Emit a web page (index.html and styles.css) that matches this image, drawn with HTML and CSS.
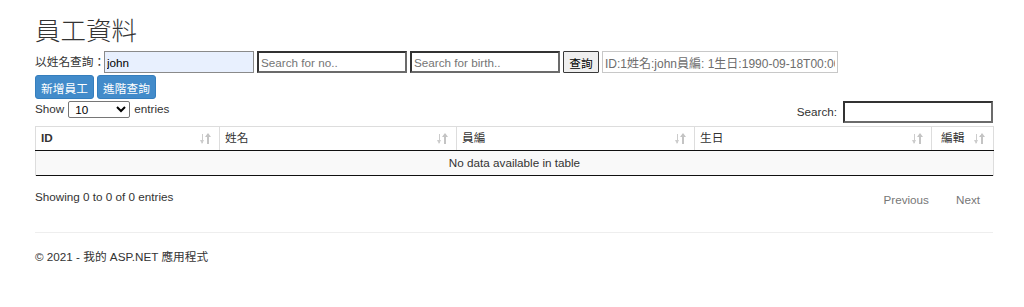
FILE: index.html
```html
<!DOCTYPE html>
<html lang="zh-Hant">
<head>
<meta charset="utf-8">
<title>員工資料</title>
<link rel="stylesheet" href="styles.css">
</head>
<body>
<div class="container">
  <h2 class="title">員工資料</h2>
  <div class="query-row">
    <label class="qlabel">以姓名查詢：</label>
    <input class="inp inp-auto" type="text" value="john">
    <input class="inp inp-dark" type="text" placeholder="Search for no..">
    <input class="inp inp-dark" type="text" placeholder="Search for birth..">
    <button class="btn-plain">查詢</button>
    <input class="inp inp-ro" type="text" readonly value="ID:1姓名:john員編: 1生日:1990-09-18T00:00:00">
  </div>
  <div class="btn-row">
    <button class="btn-blue">新增員工</button>
    <button class="btn-blue">進階查詢</button>
  </div>
  <div class="dt-top">
    <div class="dt-length">Show <select class="sel"><option>10</option></select> entries</div>
    <div class="dt-filter">Search: <input class="inp inp-dark inp-search" type="search"></div>
  </div>
  <table class="dt">
    <thead>
      <tr>
        <th class="c-id"><b>ID</b><span class="sort"></span></th>
        <th class="c-name">姓名<span class="sort"></span></th>
        <th class="c-no">員編<span class="sort"></span></th>
        <th class="c-birth">生日<span class="sort"></span></th>
        <th class="c-edit">編輯<span class="sort"></span></th>
      </tr>
    </thead>
    <tbody>
      <tr><td colspan="5" class="empty">No data available in table</td></tr>
    </tbody>
  </table>
  <div class="dt-bottom">
    <div class="dt-info">Showing 0 to 0 of 0 entries</div>
    <div class="dt-paginate"><span class="pg">Previous</span><span class="pg">Next</span></div>
  </div>
  <hr class="rule">
  <footer class="foot">© 2021 - 我的 ASP.NET 應用程式</footer>
</div>
</body>
</html>
```
FILE: styles.css
```css
html, body { margin: 0; padding: 0; background: #fff; }
body {
  font-family: "Liberation Sans", "Noto Sans CJK TC", sans-serif;
  font-size: 11.7px;
  line-height: 1.42857;
  color: #333;
}
.container { width: 958px; margin-left: 35px; }
.title {
  font-family: "Noto Sans CJK TC", sans-serif;
  font-size: 25.5px;
  font-weight: 300;
  line-height: 1.1;
  margin: 15px 0 8px;
  color: #333;
}
.query-row { display: flex; align-items: center; gap: 3px; height: 22px; }
.qlabel { width: 66px; white-space: nowrap; }
.inp {
  box-sizing: border-box;
  font-family: "Liberation Sans", "Noto Sans CJK TC", sans-serif;
  font-size: 11.7px;
  width: 150px;
  height: 22px;
  padding: 1px 2px;
  margin: 0;
  color: #000;
  background: #fff;
}
.inp::placeholder { color: #757575; }
.inp-auto { border: 1px solid #8a8a8a; background: #e8f0fe; }
.inp-dark { border: 2px solid #333; border-right-color: #6b6b6b; border-bottom-color: #6b6b6b; }
.inp-ro { width: 236px; border: 1px solid #c8c8c8; color: #6d6d6d; font-size: 12px; }
.btn-plain {
  box-sizing: border-box;
  height: 22px; width: 36px;
  padding: 0;
  font-family: "Noto Sans CJK TC", sans-serif;
  font-size: 11.7px;
  color: #000;
  background: #efefef;
  border: 1px solid #3a3a3a;
  border-radius: 1px;
}
.btn-row { display: flex; gap: 3px; margin-top: 2px; }
.btn-blue {
  box-sizing: border-box;
  width: 59px; height: 24px;
  padding: 0;
  font-family: "Liberation Sans", "Noto Sans CJK TC", sans-serif;
  font-size: 11.7px;
  color: #fff;
  background: #428bca;
  border: 1px solid #357ebd;
  border-radius: 3px;
}
.dt-top { display: flex; justify-content: space-between; align-items: flex-start; margin-top: 2px; height: 25px; }
.dt-length { display: flex; align-items: center; gap: 4px; height: 17px; }
.sel {
  box-sizing: border-box;
  width: 62px; height: 17px;
  font-family: "Liberation Sans", sans-serif;
  font-size: 11.7px;
  padding: 0 2px;
  border: 1px solid #767676;
  border-radius: 2px;
  background: #fff;
  color: #000;
}
.dt-filter { display: flex; align-items: center; gap: 6px; color: #333; }
.inp-search { width: 150px; height: 22px; }
.dt {
  width: 958px;
  table-layout: fixed;
  border-collapse: collapse;
  margin-top: 0;
  border-bottom: 1px solid #111;
}
.dt th {
  box-sizing: border-box;
  position: relative;
  text-align: left;
  font-weight: 400;
  padding: 0 18px 0 5px;
  height: 24px;
  border: 1px solid #ddd;
  border-bottom: 1px solid #111;
  vertical-align: middle;
}
.dt th b { font-weight: 700; }
.c-id { width: 184px; }
.c-name { width: 237px; }
.c-no { width: 238px; }
.c-birth { width: 237px; }
.c-edit { width: 62px; padding-left: 9px !important; }
.sort {
  position: absolute;
  right: 7px; top: 6px;
  width: 12px; height: 12px;
  background:
    linear-gradient(#ccc, #ccc) 2px 1px / 1px 9px no-repeat,
    linear-gradient(#c4c4c4, #c4c4c4) 7px 1px / 2px 10px no-repeat;
}
.sort::before, .sort::after { content: ""; position: absolute; width: 0; height: 0; }
.sort::before {
  left: 0; top: 7px;
  border-left: 2.5px solid transparent; border-right: 2.5px solid transparent;
  border-top: 4px solid #ccc;
}
.sort::after {
  left: 5px; top: 0;
  border-left: 3px solid transparent; border-right: 3px solid transparent;
  border-bottom: 4px solid #c4c4c4;
}
.dt td.empty {
  text-align: center;
  background: #f9f9f9;
  height: 24px;
  padding: 0;
  border-left: 1px solid #ddd;
  border-right: 1px solid #ddd;
}
.dt-bottom { display: flex; justify-content: space-between; margin-top: 13px; height: 37px; }
.dt-paginate { display: flex; padding-top: 3px; padding-right: 13px; }
.pg { color: #777; margin-left: 27px; }
.rule { border: 0; border-top: 1px solid #eee; margin: 6px 0 0; }
.foot { margin-top: 16px; }
```
